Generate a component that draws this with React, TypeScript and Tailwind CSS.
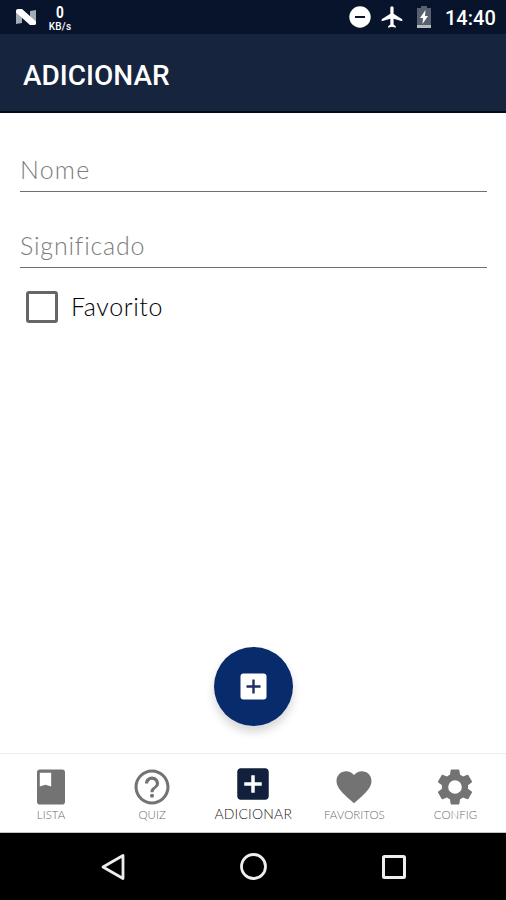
import React, { useState } from 'react';

interface IconProps {
  path: string;
  className?: string;
}

interface Tab {
  id: string;
  label: string;
  path: string;
}

const ADD_BOX = 'M19 3H5c-1.11 0-2 .9-2 2v14c0 1.1.89 2 2 2h14c1.1 0 2-.9 2-2V5c0-1.1-.9-2-2-2zm-2 10h-4v4h-2v-4H7v-2h4V7h2v4h4v2z';
const AIRPLANE = 'M21 16v-2l-8-5V3.5c0-.83-.67-1.5-1.5-1.5S10 2.67 10 3.5V9l-8 5v2l8-2.5V19l-2 1.5V22l3.5-1 3.5 1v-1.5L13 19v-5.5l8 2.5z';

const tabs: Tab[] = [
  {
    id: 'lista',
    label: 'LISTA',
    path: 'M18.500 2H5.500C4.700 2 4 2.700 4 3.500v17c0 .8.7 1.500 1.500 1.500h13c.8 0 1.500-.7 1.500-1.500v-17c0-.8-.7-1.500-1.500-1.500zM5.600 3.900h6.500v7.800l-3.250-1-3.250 1V3.900z',
  },
  {
    id: 'quiz',
    label: 'QUIZ',
    path: 'M12 15.800a1.150 1.150 0 1 0 0 2.300 1.150 1.150 0 1 0 0-2.300zM12 2C6.480 2 2 6.480 2 12s4.480 10 10 10 10-4.480 10-10S17.520 2 12 2zm0 18.250c-4.550 0-8.250-3.700-8.250-8.250S7.450 3.750 12 3.750s8.250 3.700 8.250 8.250-3.700 8.250-8.250 8.250zm0-14.250c-2.210 0-4 1.790-4 4h1.800c0-1.200 1-2.200 2.200-2.200s2.200 1 2.200 2.200c0 2-3.100 1.950-3.100 5h1.800c0-2.250 3.100-2.500 3.100-5 0-2.210-1.790-4-4-4z',
  },
  { id: 'adicionar', label: 'ADICIONAR', path: ADD_BOX },
  {
    id: 'favoritos',
    label: 'FAVORITOS',
    path: 'M12 21.35l-1.45-1.32C5.4 15.36 2 12.28 2 8.5 2 5.42 4.42 3 7.5 3c1.74 0 3.41.81 4.5 2.09C13.09 3.81 14.76 3 16.5 3 19.58 3 22 5.42 22 8.5c0 3.78-3.4 6.86-8.55 11.54L12 21.35z',
  },
  {
    id: 'config',
    label: 'CONFIG',
    path: 'M19.43 12.98c.04-.32.07-.64.07-.98s-.03-.66-.07-.98l2.11-1.65c.19-.15.24-.42.12-.64l-2-3.46c-.12-.22-.39-.3-.61-.22l-2.49 1c-.52-.4-1.08-.73-1.69-.98l-.38-2.65C14.46 2.18 14.25 2 14 2h-4c-.25 0-.46.18-.49.42l-.38 2.65c-.61.25-1.17.59-1.69.98l-2.49-1c-.23-.09-.49 0-.61.22l-2 3.46c-.13.22-.07.49.12.64l2.11 1.65c-.04.32-.07.65-.07.98s.03.66.07.98l-2.11 1.65c-.19.15-.24.42-.12.64l2 3.46c.12.22.39.3.61.22l2.49-1c.52.4 1.08.73 1.69.98l.38 2.65c.03.24.24.42.49.42h4c.25 0 .46-.18.49-.42l.38-2.65c.61-.25 1.17-.59 1.69-.98l2.49 1c.23.09.49 0 .61-.22l2-3.46c.12-.22.07-.49-.12-.64l-2.11-1.65zM12 15.900a3.900 3.900 0 1 1 0-7.800 3.900 3.900 0 0 1 0 7.800z',
  },
];

const Icon: React.FC<IconProps> = ({ path, className }) => (
  <svg viewBox="0 0 24 24" fill="currentColor" fillRule="evenodd" className={className}>
    <path d={path} />
  </svg>
);

const StatusBar: React.FC = () => (
  <div className="h-[34px] bg-[#07142b] flex items-center justify-between pl-[15px] pr-[11px] text-white">
    <div className="flex items-center gap-[11px]">
      <svg viewBox="0 0 22 18" className="w-[22px] h-[18px]">
        <path d="M1 3l6 1v11l-6 1zM15 3l6-1v13l-6-1z" fill="#a3abb8" />
        <path d="M1 2.5Q1 1 3 1h4l14 12.500v2Q21 17 19 17h-4L1 4.500z" fill="#fff" />
      </svg>
      <div className="flex flex-col items-center w-[24px] pt-[2px]">
        <span className="text-[17px] leading-[17px] font-bold scale-x-[.8]">0</span>
        <span className="text-[10px] leading-[12px] font-medium tracking-[0.2px]">KB/s</span>
      </div>
    </div>
    <div className="flex items-center">
      <svg viewBox="0 0 22 22" className="w-[22px] h-[22px] mr-[8px]">
        <circle cx="11" cy="11" r="10.700" fill="#fff" />
        <path d="M6 11h10" stroke="#07142b" strokeWidth="2" />
      </svg>
      <Icon path={AIRPLANE} className="w-[27px] h-[26px] mr-[11px]" />
      <svg viewBox="0 0 14 22" className="w-[14px] h-[22px] mr-[14px]">
        <path d="M4 0h6v2h4v20H0V2h4z" fill="#56606f" />
        <path d="M0 19h14v3H0z" fill="#b4bac2" />
        <path d="M8.500 4L3 12h3l-.5 6L11 10H8z" fill="#fff" />
      </svg>
      <span className="text-[20px] leading-none font-medium w-[50px] pt-[2px] whitespace-nowrap">14:40</span>
    </div>
  </div>
);

const Field: React.FC<{ label: string; textClass: string }> = ({ label, textClass }) => (
  <div className="h-[38px] border-b border-[#707070] text-[#7c7c7c] text-[25px] leading-[30px] font-light">
    <span className={textClass}>{label}</span>
  </div>
);

const App: React.FC = () => {
  const [favorite, setFavorite] = useState(false);
  const [active, setActive] = useState('adicionar');

  return (
    <div className="w-[506px] h-[900px] flex flex-col bg-white overflow-hidden font-[Roboto,sans-serif]">
      <StatusBar />

      {/* App bar */}
      <header className="h-[79px] bg-[#17243d] border-b-2 border-[#050a16] flex items-center pl-[23px] pt-[6px]">
        <h1 className="text-white text-[28px] leading-none font-medium">ADICIONAR</h1>
      </header>

      {/* Form */}
      <main className="flex-1 flex flex-col pl-[20px] pr-[19px] pt-[41px] font-[Lato,sans-serif]">
        <Field label="Nome" textClass="tracking-[1.2px]" />
        <div className="h-[38px]" />
        <Field label="Significado" textClass="tracking-[0.8px]" />
        <button
          onClick={() => setFavorite(!favorite)}
          className="mt-[23px] ml-[6px] flex items-center gap-[13px] h-[32px] text-left"
        >
          <span className="w-[32px] h-[32px] rounded-[3px] border-[3px] border-[#666] flex items-center justify-center">
            {favorite && <span className="w-[18px] h-[18px] bg-[#17243d]" />}
          </span>
          <span className="text-[25px] leading-[30px] pb-[2px] text-black font-light tracking-[0.6px]">Favorito</span>
        </button>
        <button className="mt-auto mb-[27px] self-center w-[79px] h-[79px] rounded-full bg-[#082b6c] text-white flex items-center justify-center shadow-[0_6px_10px_rgba(0,0,0,0.16)]">
          <svg viewBox="0 0 27 27" className="w-[27px] h-[27px]">
            <rect x=".5" y=".5" width="26" height="26" rx="3" fill="#fff" />
            <path d="M13.500 6.500v14M6.500 13.500h14" stroke="#1f2f66" strokeWidth="2.400" />
          </svg>
        </button>
      </main>

      {/* Bottom tabs */}
      <nav className="h-[80px] pl-[0.5px] border-t border-[#ececec] border-b border-b-[#c4c4c4] grid grid-cols-5 font-[Lato,sans-serif]">
        {tabs.map(tab => (
          <button
            key={tab.id}
            onClick={() => setActive(tab.id)}
            className={`flex flex-col items-center ${active === tab.id ? 'pt-[9px] text-[#13203d]' : 'pt-[12px] text-[#737373]'}`}
          >
            <Icon path={tab.path} className="w-[42px] h-[42px]" />
            <span className={active === tab.id
              ? 'text-[14px] leading-[17px] text-[#222] font-light tracking-[0.2px] whitespace-nowrap'
              : 'text-[11.5px] leading-[13px] text-[#6c6c6c] font-light whitespace-nowrap'}
            >
              {tab.label}
            </span>
          </button>
        ))}
      </nav>

      {/* System navigation */}
      <div className="h-[67px] bg-black flex items-center justify-center gap-[113px]">
        <svg viewBox="0 0 28 28" className="w-[28px] h-[28px]" fill="none" stroke="#eee" strokeWidth="2.800" strokeLinejoin="round">
          <path d="M25 2.500v23L5 14z" />
        </svg>
        <svg viewBox="0 0 28 28" className="w-[28px] h-[28px]" fill="none" stroke="#eee" strokeWidth="2.800">
          <circle cx="14.500" cy="13.500" r="12" />
        </svg>
        <svg viewBox="0 0 28 28" className="w-[28px] h-[28px]" fill="none" stroke="#eee" strokeWidth="3">
          <rect x="3.500" y="3.500" width="21" height="21" rx="1" />
        </svg>
      </div>
    </div>
  );
};

export default App;
